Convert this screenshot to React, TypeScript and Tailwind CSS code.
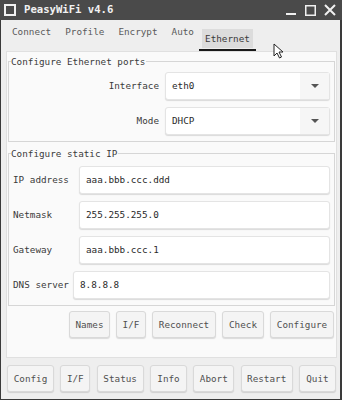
import React from "react";

const mono = { fontFamily: '"DejaVu Sans Mono", "Liberation Mono", monospace' };

function Btn({ children, w }: { children: React.ReactNode; w: string }) {
  return (
    <div
      className={`${w} h-[27px] flex items-center justify-center rounded-[3px] border border-[#d9d9d9] bg-[#f4f4f4] text-[#505050] shadow-[0_1px_1px_rgba(0,0,0,0.13)]`}
    >
      {children}
    </div>
  );
}

function Combo({ value }: { value: string }) {
  return (
    <div className="flex-1 h-[28px] flex rounded-[3px] border border-[#e4e4e4] bg-white shadow-[0_1px_1px_rgba(0,0,0,0.13)]">
      <div className="flex-1 flex items-center pl-[6px] text-[#2a2a2a]">{value}</div>
      <div className="w-[29px] flex items-center justify-center bg-[#f6f6f6]">
        <svg width="8" height="4" viewBox="0 0 8 4">
          <path d="M0 0 H8 L4 4 Z" fill="#555" />
        </svg>
      </div>
    </div>
  );
}

function Field({ label, value, lw }: { label: string; value: string; lw: string }) {
  return (
    <div className="flex items-center">
      <div className={`${lw} pl-[4px] text-[#3a3a3a]`}>{label}</div>
      <div className="flex-1 h-[28px] flex items-center pl-[6px] rounded-[3px] border border-[#e4e4e4] bg-white shadow-[0_1px_1px_rgba(0,0,0,0.13)] text-[#2a2a2a]">
        {value}
      </div>
    </div>
  );
}

export default function App() {
  return (
    <div
      className="w-[342px] h-[400px] bg-[#3a3a3a] flex flex-col text-[9.3px]"
      style={mono}
    >
      {/* title bar */}
      <div className="h-[20px] flex items-center bg-[#4a4a4a] pl-[4px] pr-[6px]">
        <div className="w-[12px] h-[12px] border-[2px] border-[#f0f0f0]" />
        <div className="ml-[8px] text-[10.6px] font-bold text-[#f2f2f2]">PeasyWiFi v4.6</div>
        <div className="flex-1" />
        <div className="flex items-center gap-[8px]">
          <svg width="11" height="11" viewBox="0 0 11 11">
            <rect x="0" y="8" width="10" height="2" fill="#f0f0f0" />
          </svg>
          <svg width="11" height="11" viewBox="0 0 11 11">
            <rect x="0.75" y="0.75" width="9.5" height="9.5" fill="none" stroke="#f0f0f0" strokeWidth="1.5" />
          </svg>
          <svg width="12" height="12" viewBox="0 0 12 12">
            <path d="M1 1 L11 11 M11 1 L1 11" stroke="#f0f0f0" strokeWidth="2" />
          </svg>
        </div>
      </div>

      {/* body */}
      <div className="flex-1 ml-[1px] mr-[2px] mb-[1px] bg-[#eeeeee] flex flex-col">
        {/* tabs */}
        <div className="h-[31px] flex items-end pl-[11px] text-[#5a5a5a]">
          <div className="flex items-center h-[22px] mb-[8px] gap-[14px]">
            <span>Connect</span>
            <span>Profile</span>
            <span>Encrypt</span>
            <span>Auto</span>
          </div>
          <div className="ml-[5px] flex flex-col items-center">
            <div className="h-[19px] px-[3px] flex items-center bg-[#dcdcdc] text-[#3a3a3a]">Ethernet</div>
            <div className="w-[57px] h-[3px] bg-[#eeeeee] flex items-end">
              <div className="w-full h-[2px] bg-[#1a1a1a]" />
            </div>
          </div>
          <div className="relative">
            <svg className="absolute left-[17px] -top-[8px]" width="12" height="17" viewBox="0 0 12 17">
              <path d="M1 1 L1 13 L4 10 L6.5 15 L8.5 14 L6 9 L10 9 Z" fill="#fff" stroke="#222" strokeWidth="1" />
            </svg>
          </div>
        </div>

        {/* panel */}
        <div className="ml-[5px] mr-[3px] h-[307px] bg-[#fafafa] border border-[#e0e0e0] flex flex-col px-[1px]">
          {/* group 1 */}
          <div className="relative mt-[9px] h-[81px] border border-[#d6d6d6] pt-[10px] pr-[4px] flex flex-col gap-[7px]">
            <div className="absolute -top-[7px] left-[2px] bg-[#fafafa] pr-[1px] text-[#3a3a3a]">
              Configure Ethernet ports
            </div>
            <div className="flex items-center">
              <div className="w-[156px] text-right pr-[6px] text-[#3a3a3a]">Interface</div>
              <Combo value="eth0" />
            </div>
            <div className="flex items-center">
              <div className="w-[156px] text-right pr-[6px] text-[#3a3a3a]">Mode</div>
              <Combo value="DHCP" />
            </div>
          </div>

          {/* group 2 */}
          <div className="relative mt-[11px] h-[153px] border border-[#d6d6d6] pt-[12px] pr-[4px] flex flex-col gap-[7px]">
            <div className="absolute -top-[7px] left-[2px] bg-[#fafafa] pr-[1px] text-[#3a3a3a]">
              Configure static IP
            </div>
            <Field label="IP address" value="aaa.bbb.ccc.ddd" lw="w-[70px]" />
            <Field label="Netmask" value="255.255.255.0" lw="w-[70px]" />
            <Field label="Gateway" value="aaa.bbb.ccc.1" lw="w-[70px]" />
            <Field label="DNS server" value="8.8.8.8" lw="w-[64px]" />
          </div>

          {/* action buttons */}
          <div className="mt-[5px] flex justify-end gap-[6px] pr-[1px]">
            <Btn w="w-[41px]">Names</Btn>
            <Btn w="w-[30px]">I/F</Btn>
            <Btn w="w-[64px]">Reconnect</Btn>
            <Btn w="w-[42px]">Check</Btn>
            <Btn w="w-[64px]">Configure</Btn>
          </div>
        </div>

        {/* bottom buttons */}
        <div className="mt-[7px] pl-[6px] pr-[4px] flex justify-between">
          <Btn w="w-[47px]">Config</Btn>
          <Btn w="w-[30px]">I/F</Btn>
          <Btn w="w-[47px]">Status</Btn>
          <Btn w="w-[37px]">Info</Btn>
          <Btn w="w-[41px]">Abort</Btn>
          <Btn w="w-[52px]">Restart</Btn>
          <Btn w="w-[37px]">Quit</Btn>
        </div>
      </div>
    </div>
  );
}
